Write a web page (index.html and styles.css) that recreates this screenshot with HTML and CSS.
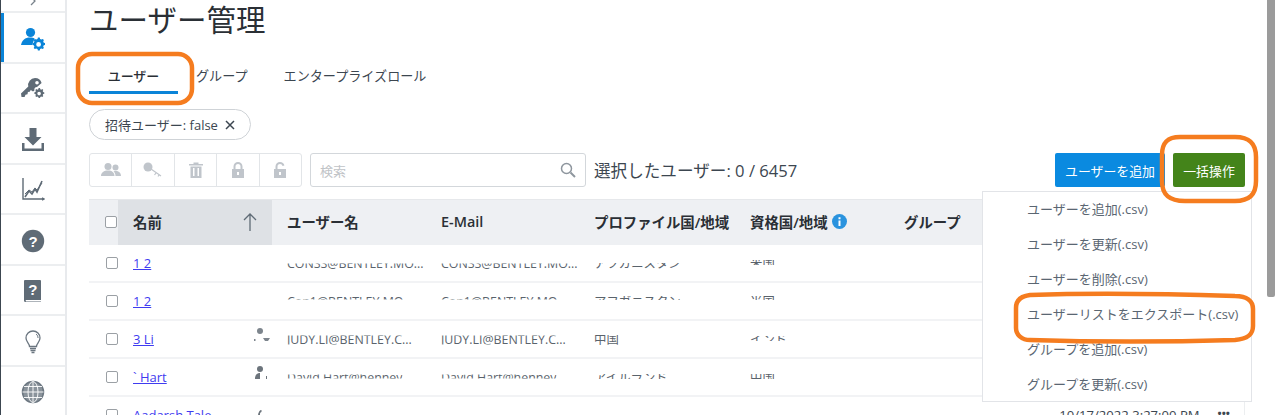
FILE: index.html
```html
<!DOCTYPE html>
<html lang="ja">
<head>
<meta charset="utf-8">
<title>ユーザー管理</title>
<link rel="stylesheet" href="styles.css">
</head>
<body>
<div class="app">
  <nav class="side">
    <div class="side-top"><svg width="8" height="8" viewBox="0 0 8 8"><path d="M2 -3 L6 1 L2 5" fill="none" stroke="#7a838c" stroke-width="1.3"/></svg></div>
    <a class="side-item active"><svg width="24" height="24" viewBox="0 0 24 24" fill="#0a84d8"><circle cx="9.5" cy="5.5" r="4.6"/><path d="M0 18c1-5 4-7.5 9-7.5 2 0 3.4.4 4.6 1L11 18z"/><path d="M17.5 10.5l1.2.1.4 1.4 1.3.6 1.3-.7 1.2 1.2-.7 1.3.6 1.3 1.4.4v1.8l-1.4.4-.6 1.3.7 1.3-1.2 1.2-1.3-.7-1.3.6-.4 1.4h-1.8l-.4-1.4-1.3-.6-1.3.7-1.2-1.2.7-1.3-.6-1.3-1.4-.4v-1.8l1.4-.4.6-1.3-.7-1.3 1.2-1.2 1.3.7 1.3-.6.4-1.4zM17.6 15a2.4 2.4 0 1 0 0 4.8 2.4 2.4 0 0 0 0-4.8z" fill-rule="evenodd"/></svg></a>
    <a class="side-item"><svg width="24" height="24" viewBox="0 0 24 24" fill="#5f6b76"><path d="M14 1a7 7 0 0 1 6.6 5L16 10a3 3 0 0 0-2.600 3.500L12 14.500 9.800 13 8.700 14.800 6.900 15 6.500 17.200 4.500 17.700 3.600 20 .5 20 0 16.500 7.300 9.500A7 7 0 0 1 14 1zm2 3a1.800 1.800 0 1 0 0 3.600A1.800 1.800 0 0 0 16 4z" fill-rule="evenodd"/><path d="M18 11l1 .1.300 1.100 1 .5 1-.6 1 1-.6 1 .5 1 1.100.3v1.400l-1.100.3-.5 1 .6 1-1 1-1-.6-1 .5-.3 1.100h-1.400l-.3-1.100-1-.5-1 .6-1-1 .6-1-.5-1-1.100-.3v-1.400l1.100-.3.5-1-.6-1 1-1 1 .6 1-.5.3-1.100zm.1 3.800a1.800 1.800 0 1 0 0 3.600 1.800 1.800 0 0 0 0-3.600z" fill-rule="evenodd"/></svg></a>
    <a class="side-item"><svg width="24" height="24" viewBox="0 0 24 24" fill="#5f6b76"><path d="M8.500 0h7v9h5L12 17.500 3.500 9h5z"/><path d="M1 15h2.500v5.500h17V15H23v8H1z"/></svg></a>
    <a class="side-item"><svg width="24" height="24" viewBox="0 0 24 24" fill="none" stroke="#5f6b76" stroke-width="1.400"><path d="M2 0v21h21"/><path d="M21 20l2 1-2 1" fill="#5f6b76"/><path d="M4 19l4-6 3 3 3-5 2 3 5-11" stroke-width="1.600"/><path d="M4 16l4-4 3 2 3-4 2 2 5-7" stroke-width="1"/></svg></a>
    <a class="side-item"><svg width="24" height="24" viewBox="0 0 24 24"><circle cx="12" cy="12" r="11.200" fill="#5f6b76"/><text x="12" y="17.500" class="glyph-q">?</text></svg></a>
    <a class="side-item"><svg width="24" height="24" viewBox="0 0 24 24"><path d="M4 1h15a1 1 0 0 1 1 1v19H5a1 1 0 0 0 0 1.500h15V23H4.500A1.500 1.500 0 0 1 3 21.500V2a1 1 0 0 1 1-1z" fill="#5f6b76"/><text x="11.800" y="15.500" class="glyph-q">?</text></svg></a>
    <a class="side-item"><svg width="24" height="24" viewBox="0 0 24 24" fill="none" stroke="#6b7680" stroke-width="1.300"><path d="M8.500 16.500c0-3-3.500-4.500-3.500-8.500a7 7 0 0 1 14 0c0 4-3.500 5.500-3.500 8.500z"/><path d="M15 4c1.500 1 2 2.500 2 4" stroke-width="1"/><path d="M9 18.500h6M9.500 20.500h5M10.500 22.500h3" stroke-width="1.500"/></svg></a>
    <a class="side-item"><svg width="24" height="24" viewBox="0 0 24 24" fill="none" stroke="#6b7680" stroke-width="1.500"><circle cx="12" cy="12" r="10.500" fill="#8a939b"/><ellipse cx="12" cy="12" rx="5" ry="10.500" stroke="#fff" stroke-width=".9"/><path d="M12 1.500v21M1.500 12h21M3 6.500h18M3 17.500h18" stroke="#fff" stroke-width=".9"/></svg></a>
  </nav>

  <main class="main">
    <h1 class="title">ユーザー管理</h1>

    <div class="tabs">
      <a class="tab tab-on">ユーザー</a>
      <a class="tab">グループ</a>
      <a class="tab">エンタープライズロール</a>
    </div>

    <div class="chip">招待ユーザー: false <svg class="chip-x" width="10" height="10" viewBox="0 0 10 10"><path d="M1 1l8 8M9 1l-8 8" stroke="#3c4650" stroke-width="1.500"/></svg></div>

    <div class="toolbar">
      <div class="btn-group">
        <span class="tool"><svg width="20" height="16" viewBox="0 0 20 16" fill="#c0c5cb"><circle cx="7" cy="4.500" r="3.500"/><circle cx="14.500" cy="5.500" r="3"/><path d="M0 14c0-3.500 3-5.500 7-5.500s6.500 2 6.500 5.500zM14.500 14c0-2-.7-3.500-2-4.500 .7-.3 1.400-.4 2.200-.4 3 0 5.300 1.700 5.300 4.900z"/></svg></span>
        <span class="tool"><svg width="20" height="16" viewBox="0 0 20 16"><circle cx="5" cy="5" r="4.500" fill="#c0c5cb"/><path d="M8 7l10 7M13 11l-1.500 2M16 13l-1 1.500" stroke="#c0c5cb" stroke-width="1.200" fill="none"/></svg></span>
        <span class="tool"><svg width="14" height="16" viewBox="0 0 14 16" fill="#c0c5cb"><path d="M0 2h4.500V.5h5V2H14v1.500H0z"/><path d="M1.500 4.500h11V16h-11zM4 6v8h1.500V6zM8.500 6v8H10V6z" fill-rule="evenodd"/></svg></span>
        <span class="tool"><svg width="14" height="16" viewBox="0 0 14 16" fill="#c0c5cb"><path d="M7 0a4.500 4.500 0 0 1 4.500 4.500V7H13v9H1V7h1.500V4.500A4.500 4.500 0 0 1 7 0zm0 2a2.500 2.500 0 0 0-2.500 2.500V7h5V4.500A2.500 2.500 0 0 0 7 2zM6 10v3h2v-3z" fill-rule="evenodd"/></svg></span>
        <span class="tool"><svg width="14" height="16" viewBox="0 0 14 16" fill="#c0c5cb"><path d="M7 0c2.300 0 4 1.500 4.400 3.500L9.500 4C9.300 2.800 8.300 2 7 2a2.500 2.500 0 0 0-2.500 2.500V7H13v9H1V7h1.500V4.500A4.500 4.500 0 0 1 7 0zM6 10v3h2v-3z" fill-rule="evenodd"/></svg></span>
      </div>
      <div class="search">
        <span class="search-ph">検索</span>
        <svg width="16" height="16" viewBox="0 0 16 16" fill="none" stroke="#8e969e" stroke-width="1.500"><circle cx="6.500" cy="6.500" r="5"/><path d="M10.500 10.500L15 15" stroke-width="2"/></svg>
      </div>
      <span class="selected">選択したユーザー: 0 / 6457</span>
      <div class="actions">
        <button class="btn btn-blue">ユーザーを追加</button>
        <button class="btn btn-green">一括操作</button>
      </div>
    </div>

    <div class="table">
      <div class="row head">
        <div class="cell cell-check"><i class="check"></i></div>
        <div class="cell cell-name sorted"><span>名前</span><svg width="14" height="18" viewBox="0 0 14 18" fill="none" stroke="#5f6b76" stroke-width="1.300"><path d="M7 18V1M1 7l6-6 6 6"/></svg></div>
        <div class="cell">ユーザー名</div>
        <div class="cell">E-Mail</div>
        <div class="cell">プロファイル国/地域</div>
        <div class="cell">資格国/地域<svg class="info" width="15" height="15" viewBox="0 0 15 15"><circle cx="7.500" cy="7.500" r="7.500" fill="#2a93de"/><path d="M6.500 6.500h2V12h-2zM6.500 3.200h2v2h-2z" fill="#fff"/></svg></div>
        <div class="cell">グループ</div>
        <div class="cell"></div>
      </div>

      <div class="row">
        <div class="cell cell-check"><i class="check"></i></div>
        <div class="cell cell-name"><a class="link">1 2</a></div>
        <div class="cell"><span class="mask m-low">CONSS@BENTLEY.MO...</span></div>
        <div class="cell"><span class="mask m-low">CONSS@BENTLEY.MO...</span></div>
        <div class="cell"><span class="mask m-low">アフガニスタン</span></div>
        <div class="cell"><span class="mask m-mid">米国</span></div>
        <div class="cell"></div><div class="cell"></div>
      </div>
      <div class="row">
        <div class="cell cell-check"><i class="check"></i></div>
        <div class="cell cell-name"><a class="link">1 2</a></div>
        <div class="cell"><span class="mask m-up">Con1@BENTLEY.MO...</span></div>
        <div class="cell"><span class="mask m-up">Con1@BENTLEY.MO...</span></div>
        <div class="cell"><span class="mask m-up">アフガニスタン</span></div>
        <div class="cell"><span class="mask m-up">米国</span></div>
        <div class="cell"></div><div class="cell"></div>
      </div>
      <div class="row">
        <div class="cell cell-check"><i class="check"></i></div>
        <div class="cell cell-name"><a class="link">3 Li</a><svg class="person person-a" width="16" height="16" viewBox="0 0 16 16" fill="#7d858d"><circle cx="6" cy="3" r="3"/><path d="M0 11h1.500v2H0zM9 10h7l-2 3h-3z"/></svg></div>
        <div class="cell"><span class="mask m-most">JUDY.LI@BENTLEY.C...</span></div>
        <div class="cell"><span class="mask m-most">JUDY.LI@BENTLEY.C...</span></div>
        <div class="cell"><span class="mask m-most">中国</span></div>
        <div class="cell"><span class="mask m-mid">インド</span></div>
        <div class="cell"></div><div class="cell"></div>
      </div>
      <div class="row">
        <div class="cell cell-check"><i class="check"></i></div>
        <div class="cell cell-name"><a class="link">` Hart</a><svg class="person person-a" width="16" height="16" viewBox="0 0 16 16" fill="#6c747c"><circle cx="6" cy="3" r="3"/><path d="M1 13c0-4 2-6 5-6v6zM12 10h1v3h-1z"/></svg></div>
        <div class="cell"><span class="mask m-mid">David Hart@hennev</span></div>
        <div class="cell"><span class="mask m-mid">David Hart@hennev</span></div>
        <div class="cell"><span class="mask m-mid">アイルランド</span></div>
        <div class="cell"><span class="mask m-mid">中国</span></div>
        <div class="cell"></div><div class="cell"></div>
      </div>
      <div class="row row-last">
        <div class="cell cell-check"><i class="check"></i></div>
        <div class="cell cell-name"><a class="link">Aadarsh Tale</a><svg class="person person-a" width="16" height="16" viewBox="0 0 16 16" fill="#6c747c"><path d="M4 16c0-3 0-5 1-6 .5-1.500 1.500-2 2.500-2v2c-1 0-1.500 1-1.500 2v4z"/></svg></div>
        <div class="cell"></div><div class="cell"></div><div class="cell"></div><div class="cell"></div>
        <div class="cell"></div>
        <div class="cell cell-date"><span>10/17/2022 3:27:00 PM</span><b class="more">•••</b></div>
      </div>
    </div>

    <div class="menu">
      <a class="menu-item">ユーザーを追加(.csv)</a>
      <a class="menu-item">ユーザーを更新(.csv)</a>
      <a class="menu-item">ユーザーを削除(.csv)</a>
      <a class="menu-item">ユーザーリストをエクスポート(.csv)</a>
      <a class="menu-item">グループを追加(.csv)</a>
      <a class="menu-item">グループを更新(.csv)</a>
    </div>
  </main>

  <div class="scrollbar"><div class="thumb"></div></div>

  <svg class="notes" width="1275" height="415" viewBox="0 0 1275 415" fill="none" stroke="#f57c1f" stroke-width="4.5">
    <rect x="78" y="54" width="114" height="49" rx="14"/>
    <path d="M1180 137h55c14 0 21 6 21 20v24c0 14-7 20-21 20h-50c-16 0-23-6-23-20v-26c0-13 6-18 18-18z"/>
    <path d="M1030 295c60-2 140-1 205 1 12 0 18 5 18 13v17c0 9-6 13-18 14-70 2-140 2-205 0-8 0-14-5-14-12v-20c0-8 6-12 14-13z"/>
  </svg>
</div>
</body>
</html>
```
FILE: styles.css
```css
* { box-sizing: border-box; }
html, body { margin: 0; height: 100%; overflow: hidden; }
body {
  font-family: "Open Sans", "Noto Sans CJK JP", sans-serif;
  color: #3c4650;
  background: #fff;
  font-size: 13px;
}
.app { position: relative; display: flex; width: 1275px; height: 415px; overflow: hidden; }

/* side rail */
.side {
  flex: 0 0 67px;
  display: flex;
  flex-direction: column;
  border-left: 1px solid #3c4650;
  border-right: 2px solid #e8eaed;
}
.side-top { height: 13px; display: flex; justify-content: center; }
.side-item {
  flex: 0 0 50.500px;
  display: flex;
  align-items: center;
  justify-content: center;
  padding-top: 3px;
  border-top: 2px solid #eceef0;
}
.side-item.active { box-shadow: inset 3px 0 0 #0a84d8; }
.glyph-q { font: 700 15px "Liberation Sans", sans-serif; fill: #fff; text-anchor: middle; }

/* main column */
.main { position: relative; flex: 1; min-width: 0; padding: 0 30px 0 22px; }
.title {
  margin: 0;
  height: 40px;
  font-size: 29.500px;
  line-height: 40px;
  font-weight: 400;
  color: #2a2f35;
}
.tabs { display: flex; height: 54px; padding-top: 20px; }
.tab { height: 34px; line-height: 32px; padding: 0 18px; color: #3c4650; white-space: nowrap; font-size: 13.100px; }
.tab-on { width: 89px; border-bottom: 3px solid #0a84d8; font-weight: 500; text-align: center; padding: 0; color: #2a2f35; font-size: 13px; }

.chip {
  margin-top: 15px;
  width: 162px;
  height: 31px;
  border: 1px solid #cfd3d7;
  border-radius: 16px;
  padding-left: 15px;
  white-space: nowrap;
  display: flex;
  align-items: center;
}
.chip-x { margin-left: 7px; }

/* toolbar */
.toolbar { display: flex; align-items: center; margin-top: 13px; height: 34px; }
.btn-group { display: flex; width: 213px; height: 34px; border: 1px solid #e2e5e8; border-radius: 3px; }
.tool { flex: 1; display: flex; align-items: center; justify-content: center; }
.tool + .tool { border-left: 1px solid #e2e5e8; }
.search {
  width: 276px;
  height: 34px;
  margin-left: 8px;
  border: 1px solid #d3d7db;
  border-radius: 3px;
  display: flex;
  align-items: center;
  justify-content: space-between;
  padding: 0 9px;
}
.search-ph { color: #bfc3c7; font-size: 13px; }
.selected { margin-left: 8px; font-size: 16.600px; white-space: nowrap; color: #3c4650; }
.actions { margin-left: auto; display: flex; gap: 8px; }
.btn { height: 34px; border: 0; border-radius: 2px; color: #fff; font: inherit; font-size: 12.900px; padding: 0; }
.btn-blue { width: 110px; background: #0a8ae0; }
.btn-green { width: 72px; background: #44841a; }

/* table */
.table { margin-top: 12px; }
.row {
  display: grid;
  grid-template-columns: 29px 154px 154px 153px 156px 154px 1fr 185px;
  height: 38px;
  border-bottom: 2px solid #f2f3f5;
  align-items: stretch;
}
.head {
  height: 46px;
  background: #eef0f3;
  border-top: 1px solid #e6e8eb;
  border-bottom: 0;
  font-weight: 600;
  font-size: 14.400px;
  color: #2a2f35;
}
.head .cell { padding-bottom: 2px; }
.row-last { border-right: 1px solid #eceef0; border-bottom: 0; }
.row-last .cell { padding-bottom: 2px; }
.cell { display: flex; align-items: center; padding-left: 15px; white-space: nowrap; min-width: 0; }
.cell.cell-check { padding-left: 17px; }
.head .cell.cell-check { padding-left: 16px; }
.cell-name { justify-content: space-between; padding-right: 15px; }
.sorted { background: #dee1e5; }
.info { margin-left: 4px; }
.check { display: block; width: 12px; height: 12px; border: 1.500px solid #9ba0a5; border-radius: 2px; background: #fff; }
.link { color: #3f3cf0; text-decoration: underline; font-size: 13px; }
.person-a { margin-right: -13px; flex: none; margin-top: -6px; }
.row-last .person-a { margin-top: -10px; }
.cell-date { justify-content: flex-end; padding-right: 14px; padding-left: 0; gap: 18px; }
.cell-date span { font-size: 13.100px; }
.more { font-size: 11px; line-height: 1; margin-bottom: 6px; }
.mask { display: inline-block; font-size: 12.400px; color: #5a636c; }
.m-low { clip-path: inset(9px 0 2px 0); }
.m-up { clip-path: inset(4px 0 10px 0); }
.m-most { clip-path: inset(5px 0 3px 0); }
.m-mid { clip-path: inset(6px 0 7px 0); }

/* overlays */
.menu {
  position: absolute;
  left: 915px;
  top: 191px;
  width: 270px;
  height: 211px;
  background: #fff;
  border: 1px solid #e2e4e8;
  display: flex;
  flex-direction: column;
  z-index: 2;
}
.menu-item { height: 35px; line-height: 35px; padding-left: 44px; color: #5a6672; font-size: 13px; white-space: nowrap; }
.scrollbar { position: absolute; right: 0; top: 0; width: 8px; height: 415px; background: #fff; }
.thumb { height: 297px; background: #9b9b9b; border-radius: 0 0 2px 2px; }
.notes { position: absolute; left: 0; top: 0; z-index: 3; pointer-events: none; }
```
